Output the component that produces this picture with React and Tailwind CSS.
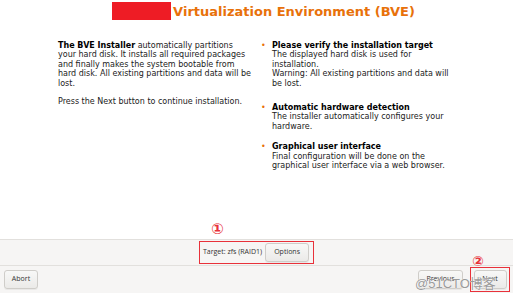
const body = { fontFamily: '"DejaVu Sans", "Liberation Sans", sans-serif' };
const gtk = { fontFamily: '"Open Sans", "Liberation Sans", sans-serif' };

const features = [
  {
    title: 'Please verify the installation target',
    lines: ['The displayed hard disk is used for', 'installation.', 'Warning: All existing partitions and data will', 'be lost.'],
  },
  { title: 'Automatic hardware detection', lines: ['The installer automatically configures your', 'hardware.'] },
  {
    title: 'Graphical user interface',
    lines: ['Final configuration will be done on the', 'graphical user interface via a web browser.'],
  },
];

function Btn({ children, className = '' }) {
  return (
    <button
      style={gtk}
      className={`h-[19px] rounded-[3px] border border-[#cfcdc9] bg-gradient-to-b from-[#f8f8f7] to-[#ebeae8] text-[7px] text-[#333] shadow-[0_1px_0_rgba(0,0,0,0.05)] ${className}`}
    >
      {children}
    </button>
  );
}

export default function App() {
  return (
    <div className="relative flex h-[293px] w-[513px] flex-col overflow-hidden bg-white text-[#222]" style={body}>
      <header className="flex h-[22px] items-center justify-center pl-[14px]">
        <div className="flex items-center">
          <div className="h-[18px] w-[59px] bg-[#ee1c25]" />
          <h1 className="ml-[2px] text-[13px] font-bold leading-none text-[#e8710a]">Virtualization Environment (BVE)</h1>
        </div>
      </header>

      <main className="flex flex-1 whitespace-nowrap pt-[19px] text-[8px] leading-[9.4px]">
        <div className="ml-[58px] w-[203px]">
          <p>
            <b className="text-black">The BVE Installer</b> automatically partitions
            <br />
            your hard disk. It installs all required packages
            <br />
            and finally makes the system bootable from
            <br />
            hard disk. All existing partitions and data will be
            <br />
            lost.
          </p>
          <p className="mt-[9px]">Press the Next button to continue installation.</p>
        </div>
        <ul className="w-[193px]">
          {features.map((f, i) => (
            <li key={f.title} className={`flex ${i === 0 ? 'mb-[15px]' : 'mb-[11px]'}`}>
              <span className="w-[11px] text-[#e8710a]">•</span>
              <div className="flex-1">
                <b className="text-black">{f.title}</b>
                {f.lines.map((l) => (
                  <p key={l}>{l}</p>
                ))}
              </div>
            </li>
          ))}
        </ul>
      </main>

      <div className="flex h-[27px] items-center justify-center border-y border-[#e2e0dd] bg-[#f6f5f4]">
        <div className="relative flex h-[23px] items-center gap-[3px] border border-[#e8313a] pl-[3px] pr-[4px]">
          <span style={gtk} className="text-[7px] text-[#333]">Target: zfs (RAID1)</span>
          <Btn className="w-[44px]">Options</Btn>
          <span className="absolute left-[11px] top-[-24px] text-[15px] font-bold text-[#e8313a]">①</span>
        </div>
      </div>

      <footer className="flex h-[27px] items-center justify-between bg-[#f6f5f4] pl-[4px] pr-[3px]">
        <Btn className="w-[34px]">Abort</Btn>
        <div className="flex items-center gap-[7px]">
          <Btn className="w-[45px]">Previous</Btn>
          <div className="relative flex h-[25px] w-[40px] items-center justify-center border border-[#e8313a]">
            <Btn className="w-[33px]">Next</Btn>
            <span className="absolute left-[1px] top-[-17px] text-[14px] font-bold text-[#e8313a]">②</span>
          </div>
        </div>
      </footer>

      <div
        className="pointer-events-none absolute left-[415px] top-[274px] text-[13px] text-[#9a9a9a]"
        style={{
          fontFamily: '"Liberation Sans", "Noto Sans CJK SC", sans-serif',
          textShadow: '0 0 1px #fff, 0 0 1px #fff',
        }}
      >
        @51CTO博客
      </div>
    </div>
  );
}
